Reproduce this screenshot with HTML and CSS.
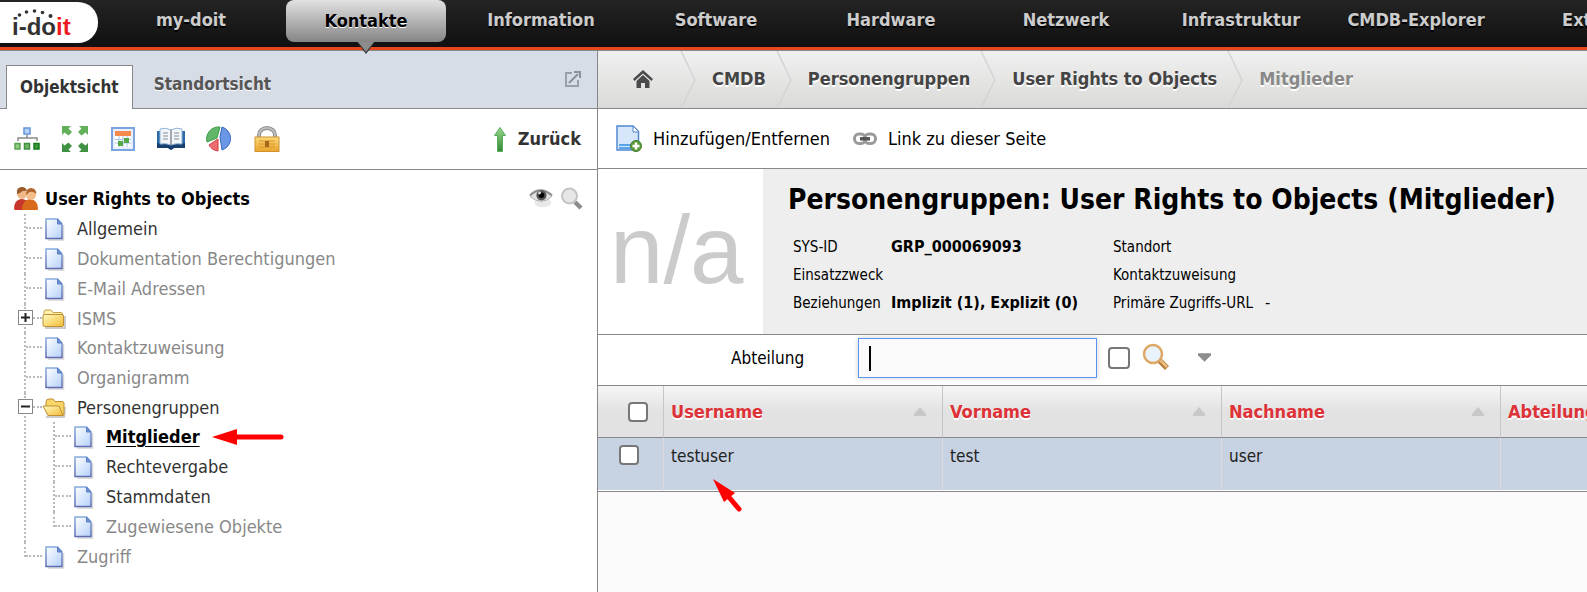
FILE: index.html
```html
<!DOCTYPE html>
<html lang="de">
<head>
<meta charset="utf-8">
<title>i-doit – Personengruppen</title>
<link rel="stylesheet" href="styles.css">
</head>
<body>
<svg class="defs" aria-hidden="true">
  <defs>
    <linearGradient id="gDoc" x1="0" y1="0" x2="1" y2="1"><stop offset="0" stop-color="#fff"/><stop offset="1" stop-color="#b4d0fa"/></linearGradient>
    <linearGradient id="gEdge" x1="0" y1="0" x2="0" y2="1"><stop offset="0" stop-color="#86abde"/><stop offset="1" stop-color="#5f6bb0"/></linearGradient>
    <linearGradient id="gFolder" x1="0" y1="0" x2="1" y2="1"><stop offset="0" stop-color="#fffbc0"/><stop offset="1" stop-color="#f3bb38"/></linearGradient>
    <linearGradient id="gGreen" x1="0" y1="0" x2="0" y2="1"><stop offset="0" stop-color="#9bd88c"/><stop offset="1" stop-color="#2f8a36"/></linearGradient>
    <linearGradient id="gGold" x1="0" y1="0" x2="0" y2="1"><stop offset="0" stop-color="#fbd979"/><stop offset="1" stop-color="#e9a52c"/></linearGradient>
    <symbol id="doc" viewBox="0 0 20 23">
      <path d="M3 22h15.500V7" fill="none" stroke="#999" stroke-opacity=".4" stroke-width="1.500"/>
      <path d="M1 1h11.500l4.500 5v14.500H1z" fill="url(#gDoc)" stroke="url(#gEdge)" stroke-width="1.500"/>
      <path d="M12.500 1v5H17z" fill="#6f92d4" stroke="#5a7fc4"/>
    </symbol>
    <symbol id="folder" viewBox="0 0 24 20">
      <path d="M3 19h20V7" fill="none" stroke="#999" stroke-opacity=".5" stroke-width="2"/>
      <path d="M2 5V3q0-2 2-2h5l2 2.500h8q1.500 0 1.500 1.500v3H2z" fill="#fdf2b0" stroke="#c9a043"/>
      <rect x="1" y="5.500" width="20.500" height="12" rx="1.500" fill="url(#gFolder)" stroke="#bf8f30"/>
    </symbol>
    <symbol id="folder-open" viewBox="0 0 24 20">
      <path d="M4 19h18l1-10" fill="none" stroke="#999" stroke-opacity=".5" stroke-width="2"/>
      <path d="M4 12V4q0-3 3-3h4l2 2.500h7q2 0 2 2V17H6z" fill="#f9d468" stroke="#bf8f30"/>
      <path d="M1 8h16l4 9.500H6z" fill="url(#gFolder)" stroke="#bf8f30"/>
    </symbol>
    <symbol id="chev" viewBox="0 0 17 57"><path d="M1 0l14 29L1 57" fill="none" stroke="#d4d4d4" stroke-width="1.500"/></symbol>
    <symbol id="sort" viewBox="0 0 12 9"><path d="M6 0l6 7v2H0V7z" fill="#c8c8c8"/></symbol>
  </defs>
</svg>

<header class="topbar">
  <a class="logo" href="#" aria-label="i-doit">
    <span>i-do<em>it</em></span>
    <svg class="logo-dots" viewBox="0 0 40 10" width="40" height="10"><g fill="#333"><circle cx="2.500" cy="6" r="1.800"/><circle cx="9.500" cy="3" r="1.800"/><circle cx="17.500" cy="2" r="1.800"/><circle cx="25.500" cy="3.500" r="1.800"/><circle cx="33.500" cy="7" r="2"/></g></svg>
  </a>
  <nav class="mainnav">
    <a href="#">my-doit</a>
    <a href="#" class="active">Kontakte<svg class="pointer" viewBox="0 0 18 12" width="18" height="12"><path d="M0 0h18L9 12z" fill="#333"/><path d="M1 0h16L9 10z" fill="#8c8c8c"/></svg></a>
    <a href="#">Information</a>
    <a href="#">Software</a>
    <a href="#">Hardware</a>
    <a href="#">Netzwerk</a>
    <a href="#">Infrastruktur</a>
    <a href="#">CMDB-Explorer</a>
    <a href="#">Extras</a>
  </nav>
</header>

<div class="layout">
  <aside class="sidebar">
    <div class="tabs">
      <a href="#" class="tab current">Objektsicht</a>
      <a href="#" class="tab">Standortsicht</a>
      <button class="detach" aria-label="Öffnen"><svg viewBox="0 0 16 16" width="16" height="16"><path d="M7 2H1v13h12V9" fill="none" stroke="#9a9fa5" stroke-width="2"/><path d="M4 12L13 3M9 1h6v6" fill="none" stroke="#8c9196" stroke-width="2"/></svg></button>
    </div>
    <div class="iconbar">
      <button aria-label="Struktur"><svg viewBox="0 0 26 26" width="26" height="26"><rect x="10" y="2" width="6" height="6" fill="#b5d4fa" stroke="#6393dc" stroke-width="1.500"/><path d="M13 9v3M4 15v-3h19v3" fill="none" stroke="#8a8a8a" stroke-width="1.500"/><rect x="1" y="17.500" width="5" height="5.500" fill="#8fca80" stroke="#5aa552" stroke-width="1.500"/><rect x="10.500" y="17.500" width="5" height="5.500" fill="#70b764" stroke="#3f9140" stroke-width="1.500"/><rect x="20" y="17.500" width="5" height="5.500" fill="#3f9a3b" stroke="#157b1c" stroke-width="1.500"/></svg></button>
      <button aria-label="Ausklappen"><svg viewBox="0 0 26 26" width="26" height="26"><g fill="#62b15a"><path d="M0 0h9L6.500 2.500 10 6 6.500 9.500 2.500 6.500 0 9z"/><path d="M26 0h-9l2.500 2.500L16 6l3.500 3.500L23.500 6.500 26 9z"/></g><g fill="#3f9144"><path d="M0 26h9l-2.500-2.500L10 20l-3.500-3.500L2.500 19.500 0 17z"/><path d="M26 26h-9l2.500-2.500L16 20l3.500-3.500 4 3L26 17z"/></g></svg></button>
      <button aria-label="Kalender"><svg viewBox="0 0 24 24" width="24" height="24"><rect x="1" y="1" width="22" height="22" fill="#e7f0fc" stroke="#7ba4e0" stroke-width="2"/><rect x="4" y="4" width="16" height="16" fill="#fff"/><rect x="4" y="4" width="16" height="5" fill="#f58a4c"/><path d="M4 12.500h16M4 16h16M8 9v11M12 9v11M16 9v11" stroke="#a9c4e6"/><rect x="7" y="14" width="5" height="5" fill="#54a845"/><rect x="13" y="11" width="5" height="5" fill="#54a845"/></svg></button>
      <button aria-label="Handbuch"><svg viewBox="0 0 28 26" width="28" height="26"><path d="M0 5h28v17H17l-3 2-3-2H0z" fill="#2c69a8"/><path d="M0 17h28v5H17l-3 2-3-2H0z" fill="#173f6f"/><path d="M3 3q6-2 11 1 5-3 11-1v15q-6-1-11 1-5-2-11-1z" fill="#f3f6f9" stroke="#8fb4d8"/><path d="M14 4v15" stroke="#889" stroke-width="1.500"/><path d="M6 7h5M6 10h5M6 13h5M17 7h5M17 10h5M17 13h5" stroke="#a7b0ba" stroke-width="1.500"/></svg></button>
      <button aria-label="Auswertung"><svg viewBox="0 0 26 26" width="26" height="26"><path d="M11 12L14 1A12 12 0 0 0 1 16z" fill="#62b86a" stroke="#3b9c48"/><path d="M16 1a12 12 0 0 1 0 23l-2-13z" fill="#6a98e6" stroke="#3a68c0"/><path d="M12 13v12A12 12 0 0 1 3 19z" fill="#ec6c70" stroke="#d53c42"/></svg></button>
      <button aria-label="Rechte"><svg viewBox="0 0 26 26" width="26" height="26"><path d="M5 13V9a8 7 0 0 1 16 0v4" fill="none" stroke="#8c8c8c" stroke-width="4"/><path d="M5 12V9a8 7 0 0 1 16 0v3" fill="none" stroke="#bdbdbd" stroke-width="2"/><rect x="1" y="11" width="24" height="14.500" fill="url(#gGold)" stroke="#cf9430"/><path d="M5 15h16M5 18h16M5 21h16" stroke="#d9942a"/><rect x="11" y="15" width="4" height="6" fill="#a8681c"/></svg></button>
      <a href="#" class="back"><svg viewBox="0 0 12 25" width="12" height="25"><path d="M6 .5l5.500 8H8.500v16h-5v-16H.5z" fill="url(#gGreen)" stroke="#58a95a"/></svg>Zurück</a>
    </div>
    <div class="tree">
      <div class="tree-head">
        <svg viewBox="0 0 24 24" width="24" height="24"><path d="M0 22q0-9 7-10 6 0 8 5v6H1z" fill="#c9372c"/><circle cx="8" cy="7" r="5" fill="#f0b887"/><path d="M3 7q-1-7 5-7 4 0 5 4-5-1-7 2z" fill="#9a5a2c"/><path d="M8 23q0-10 8-11 8 1 8 10 0 1-1 1z" fill="#d96a1c"/><circle cx="17" cy="8" r="5" fill="#f3bd8c"/><path d="M12 8q0-7 5-7t5.500 6q-4-3-7-2z" fill="#b0652c"/></svg>
        <a href="#">User Rights to Objects</a>
        <button class="eye" aria-label="Anzeigen"><svg viewBox="0 0 26 24" width="24" height="24"><ellipse cx="15" cy="16" rx="9" ry="5" fill="#e8e8e8"/><path d="M1 9q11-11 24 0-12 11-24 0z" fill="#e4e4e4" stroke="#aaa"/><path d="M1 8q11-11 24 0" fill="none" stroke="#8c8c8c" stroke-width="2"/><circle cx="13.500" cy="8" r="5.500" fill="#555"/><circle cx="13.500" cy="8" r="3" fill="#000"/><circle cx="11.500" cy="5.500" r="1.500" fill="#ddd"/></svg></button>
        <button aria-label="Suchen"><svg viewBox="0 0 24 24" width="24" height="24"><path d="M15 15l6 6" stroke="#8d8d8d" stroke-width="4.500"/><circle cx="9.500" cy="9" r="7.500" fill="#e6e6e6" stroke="#c4c4c4" stroke-width="2"/></svg></button>
      </div>
      <ul class="branch">
        <li><a href="#" class="on"><svg class="doc"><use href="#doc"/></svg>Allgemein</a></li>
        <li><a href="#"><svg class="doc"><use href="#doc"/></svg>Dokumentation Berechtigungen</a></li>
        <li><a href="#"><svg class="doc"><use href="#doc"/></svg>E-Mail Adressen</a></li>
        <li class="dir"><button class="toggle" aria-label="Aufklappen"><svg viewBox="0 0 15 15" width="15" height="15"><path d="M3 7.500h9M7.500 3v9" stroke="#222" stroke-width="2"/></svg></button><a href="#"><svg class="fold"><use href="#folder"/></svg>ISMS</a></li>
        <li><a href="#"><svg class="doc"><use href="#doc"/></svg>Kontaktzuweisung</a></li>
        <li><a href="#"><svg class="doc"><use href="#doc"/></svg>Organigramm</a></li>
        <li class="dir"><button class="toggle" aria-label="Zuklappen"><svg viewBox="0 0 15 15" width="15" height="15"><path d="M3 7.500h9" stroke="#222" stroke-width="2"/></svg></button><a href="#" class="on"><svg class="fold"><use href="#folder-open"/></svg>Personengruppen</a>
          <ul class="branch">
            <li><a href="#" class="selected"><svg class="doc"><use href="#doc"/></svg><span>Mitglieder</span></a>
              <svg class="mark" viewBox="0 0 72 16" width="72" height="16"><path d="M0 8L25 0v16z" fill="#f00"/><path d="M24 8h45" stroke="#f00" stroke-width="5" stroke-linecap="round"/></svg></li>
            <li><a href="#" class="on"><svg class="doc"><use href="#doc"/></svg>Rechtevergabe</a></li>
            <li><a href="#" class="on"><svg class="doc"><use href="#doc"/></svg>Stammdaten</a></li>
            <li><a href="#"><svg class="doc"><use href="#doc"/></svg>Zugewiesene Objekte</a></li>
          </ul>
        </li>
        <li><a href="#"><svg class="doc"><use href="#doc"/></svg>Zugriff</a></li>
      </ul>
    </div>
  </aside>

  <main class="content">
    <nav class="crumbs">
      <a href="#" class="home" aria-label="Start"><svg viewBox="0 0 20 18" width="20" height="18"><path d="M10 0l10 9-1.500 2L10 3.500 1.500 11 0 9z" fill="#4a4a4a"/><path d="M3.500 11L10 5l6.500 6v7H12v-5H8v5H3.500z" fill="#4a4a4a"/></svg></a>
      <svg class="chev"><use href="#chev"/></svg>
      <a href="#">CMDB</a>
      <svg class="chev"><use href="#chev"/></svg>
      <a href="#">Personengruppen</a>
      <svg class="chev"><use href="#chev"/></svg>
      <a href="#">User Rights to Objects</a>
      <svg class="chev"><use href="#chev"/></svg>
      <a href="#" class="last">Mitglieder</a>
    </nav>
    <div class="actions">
      <button><svg viewBox="0 0 26 27" width="26" height="27"><path d="M1 1h16l5.500 5.500V25H1z" fill="#d7e7fb" stroke="#5088d0" stroke-width="1.500"/><path d="M17 1v6h6z" fill="#fff" stroke="#5088d0"/><path d="M3 19h12v2H3zM3 22h12v2H3z" fill="#57a4e8"/><circle cx="20" cy="21" r="5.500" fill="#5d9b3c" stroke="#3f7c2a"/><path d="M20 17.500v7M16.500 21h7" stroke="#fff" stroke-width="2.500"/></svg>Hinzufügen/Entfernen</button>
      <a href="#"><svg viewBox="0 0 24 14" width="24" height="14"><rect x="1.500" y="2" width="11" height="9.500" rx="4.500" fill="none" stroke="#9a9a9a" stroke-width="3"/><rect x="11.500" y="2" width="11" height="9.500" rx="4.500" fill="none" stroke="#9a9a9a" stroke-width="3"/><path d="M7 6.800h10" stroke="#555" stroke-width="3.500"/></svg>Link zu dieser Seite</a>
    </div>
    <section class="object">
      <div class="thumb">n/a</div>
      <div class="facts">
        <h1>Personengruppen: User Rights to Objects (Mitglieder)</h1>
        <dl>
          <dt>SYS-ID</dt><dd>GRP_000069093</dd><dt>Standort</dt><dd></dd>
          <dt>Einsatzzweck</dt><dd></dd><dt>Kontaktzuweisung</dt><dd></dd>
          <dt>Beziehungen</dt><dd>Implizit (1), Explizit (0)</dd><dt>Primäre Zugriffs-URL</dt><dd class="plain">-</dd>
        </dl>
      </div>
    </section>
    <form class="filter">
      <label for="dept">Abteilung</label>
      <div class="field"><input id="dept" type="text"><i class="caret"></i></div>
      <input type="checkbox" class="big" aria-label="Filter">
      <button type="button" class="find" aria-label="Suchen"><svg viewBox="0 0 28 28" width="28" height="28"><path d="M17 17l8 8" stroke="#b87c3a" stroke-width="5.500"/><path d="M18 17l7 7" stroke="#e9c085" stroke-width="2.500"/><circle cx="11" cy="11" r="9" fill="#eaf2fb" stroke="#dca864" stroke-width="2.500"/></svg></button>
      <button type="button" aria-label="Mehr"><svg viewBox="0 0 14 9" width="13" height="9"><path d="M0 0h14v2L7 9 0 2z" fill="#8d8d8d"/></svg></button>
    </form>
    <div class="list">
      <table>
        <colgroup><col class="c-check"><col class="c-data"><col class="c-data"><col class="c-data"><col class="c-data"></colgroup>
        <thead><tr>
          <th><input type="checkbox" aria-label="Alle"></th>
          <th><div><span>Username</span><svg class="sort"><use href="#sort"/></svg></div></th>
          <th><div><span>Vorname</span><svg class="sort"><use href="#sort"/></svg></div></th>
          <th><div><span>Nachname</span><svg class="sort"><use href="#sort"/></svg></div></th>
          <th><div><span>Abteilung</span></div></th>
        </tr></thead>
        <tbody><tr>
          <td><input type="checkbox" aria-label="testuser"></td>
          <td>testuser<svg class="mark" viewBox="0 0 30 33" width="30" height="33"><path d="M0 0l22 14-11 9z" fill="#f00"/><path d="M15 17l11 13" stroke="#f00" stroke-width="5" stroke-linecap="round"/></svg></td>
          <td>test</td><td>user</td><td></td>
        </tr></tbody>
      </table>
    </div>
  </main>
</div>
</body>
</html>
```
FILE: styles.css
```css
* { box-sizing: border-box; }
html, body { height: 100%; margin: 0; }
body {
  display: flex; flex-direction: column; overflow: hidden; background: #fff; color: #000;
  font: 17px/20px "DejaVu Sans Condensed", "DejaVu Sans", "Noto Sans", sans-serif;
}
a { color: inherit; text-decoration: none; }
button { font: inherit; color: inherit; background: none; border: 0; padding: 0; display: flex; align-items: center; }
svg { display: block; flex: none; }
.defs { position: absolute; width: 0; height: 0; }

.topbar {
  flex: none; display: flex; height: 51px; border-bottom: 1px solid #888;
  background: linear-gradient(#242424, #101010 47px, #e8471c 47px);
}
.logo {
  position: relative; flex: none; width: 98px; height: 41px; margin: 2px 13px 0 0; padding: 12px 0 0 12px;
  background: #fff; border-radius: 0 20px 20px 0;
  font: bold 24px/25px "Liberation Sans", sans-serif; color: #333;
}
.logo em { font-style: normal; color: #ed1c24; }
.logo-dots { position: absolute; left: 17px; top: 7px; }
.mainnav { display: flex; gap: 15px; }
.mainnav a {
  position: relative; flex: none; width: 160px; height: 42px; line-height: 40px; text-align: center;
  font-size: 18px; font-weight: bold; color: #ccc; text-shadow: 0 2px 0 #000;
}
.mainnav .active {
  color: #000; line-height: 42px; text-shadow: 0 1px 0 #fff; border-radius: 8px;
  background: linear-gradient(#e2e2e2, #858585);
}
.pointer { position: absolute; left: 71px; top: 42px; z-index: 2; }

.layout { flex: 1; display: flex; min-height: 0; }
.sidebar { flex: none; width: 598px; border-right: 1px solid #888; background: #fff; }
.tabs {
  display: flex; align-items: flex-end; height: 58px; padding: 0 16px 0 6px;
  background: #d6dde6; border-bottom: 1px solid #888; font-weight: bold;
}
.tab { padding: 0 21px; height: 44px; line-height: 40px; color: #555; text-shadow: 0 1px 0 #fff; }
.tab.current {
  line-height: 42px; margin-bottom: -1px; padding: 0 13px; color: #333;
  background: #fff; border: 1px solid #888; border-bottom: 0;
}
.detach { margin: 0 0 21px auto; }
.iconbar { display: flex; align-items: center; gap: 22px; height: 61px; padding: 0 16px 0 14px; border-bottom: 1px solid #888; }
.iconbar button { width: 26px; justify-content: center; }
.back { display: flex; align-items: center; gap: 12px; margin-left: auto; font-weight: bold; font-size: 18px; color: #333; }

.tree { padding: 14px 13px; font-size: 18px; }
.tree-head { display: flex; align-items: center; height: 30px; gap: 7px; padding-left: 1px; padding-bottom: 1px; font-weight: bold; }
.eye { margin-left: auto; }
.branch { list-style: none; margin: 0; padding: 0; }
.branch li { position: relative; padding-left: 32px; color: #888; }
.branch li::before {
  content: ""; position: absolute; left: 11px; top: 0; bottom: 0; border-left: 2px dotted #bbb;
}
.branch li:last-child::before { bottom: auto; height: 15px; }
.branch li::after {
  content: ""; position: absolute; left: 13px; top: 13px; width: 16px; border-top: 2px dotted #bbb;
}
.branch a { display: flex; align-items: center; height: 30px; }
.dir > a { height: 29px; }
.branch .on { color: #333; }
.branch .selected { color: #000; font-weight: bold; }
.selected span { text-decoration: underline; text-underline-offset: 3px; }
.doc { width: 20px; height: 23px; margin-right: 12px; }
.fold { width: 24px; height: 20px; margin: 0 11px 0 -3px; }
.toggle { position: absolute; left: 5px; top: 6px; z-index: 1; background: #fff; border: 1px solid #888; width: 15px; height: 15px; justify-content: center; }
.dir > .branch { margin-left: -3px; }
.branch .mark { position: absolute; left: 170px; top: 7px; }

.content { flex: 1; min-width: 0; background: #fafafa; }
.crumbs {
  display: flex; align-items: center; height: 58px; padding-left: 35px; overflow: hidden;
  border-bottom: 1px solid #888; background: linear-gradient(#f0f0f0, #dadad8);
  font-weight: bold; font-size: 18px; color: #444; text-shadow: 0 2px 0 #fff;
}
.crumbs a { white-space: nowrap; padding: 0 10px 1px 15px; }
.crumbs .home { padding: 0 27px 1px 0; }
.crumbs .last { color: #888; }
.chev { width: 17px; height: 57px; }
.actions { display: flex; align-items: center; gap: 23px; height: 60px; padding-left: 18px; background: #fff; border-bottom: 1px solid #888; font-size: 18px; }
.actions a, .actions button { display: flex; align-items: center; gap: 11px; }

.object { display: flex; height: 166px; background: #eee; border-bottom: 1px solid #888; }
.thumb { flex: none; width: 165px; padding-left: 12px; background: #fff; color: #cbcbcb; font: 96px/162px "Liberation Sans", sans-serif; }
.facts { flex: 1; min-width: 0; padding: 15px 0 0 25px; }
h1 { margin: 0 0 17px; font-size: 28px; line-height: 32px; white-space: nowrap; }
dl { display: grid; grid-template-columns: 98px 222px 152px 1fr; margin: 0; padding-left: 5px; font-size: 15px; line-height: 28px; grid-auto-rows: 28px; }
dd { margin: 0; font-size: 16px; font-weight: bold; white-space: nowrap; }
dd.plain { font-weight: normal; }

.filter { display: flex; align-items: center; height: 51px; padding: 0 0 5px 133px; background: #fff; border-bottom: 1px solid #888; }
.filter label { width: 127px; }
.field { position: relative; }
.field input { display: block; width: 239px; height: 40px; padding: 0 10px; border: 1px solid #5a96f0; background: #fafafa; box-shadow: 0 0 5px #ccc; font: inherit; outline: 0; }
.caret { position: absolute; left: 11px; top: 8px; width: 2px; height: 25px; background: #000; }
input[type="checkbox"] { appearance: none; display: block; width: 20px; height: 20px; margin: 0; background: #fff; border: 2px solid #777; border-radius: 4px; }
.filter .big { width: 22px; height: 22px; margin: 0 12px 0 11px; }
.find { margin: 0 28px 2px 0; }

.list { border-bottom: 1px solid #888; }
table { table-layout: fixed; width: 1181px; border-collapse: separate; border-spacing: 0; }
.c-check { width: 66px; }
.c-data { width: 279px; }
th { height: 52px; padding: 0 16px 0 7px; text-align: left; font-size: 18px; color: #dd3237; text-shadow: 0 2px 0 #fff; background: linear-gradient(#f6f6f6, #e2e2e2 50%, #e2e2e2); border-right: 1px solid #c6c6c6; border-bottom: 1px solid #888; }
th:first-child { padding-left: 30px; }
th div { display: flex; align-items: center; justify-content: space-between; }
.sort { width: 12px; height: 9px; }
td { position: relative; height: 53px; padding: 8px 7px; vertical-align: top; color: #222; background: #c7d2e3; border-right: 1px solid #dcdcdc; border-bottom: 1px solid #fff; }
td:first-child { padding: 7px 0 0 21px; }
td .mark { position: absolute; left: 49px; top: 41px; z-index: 1; }
```
